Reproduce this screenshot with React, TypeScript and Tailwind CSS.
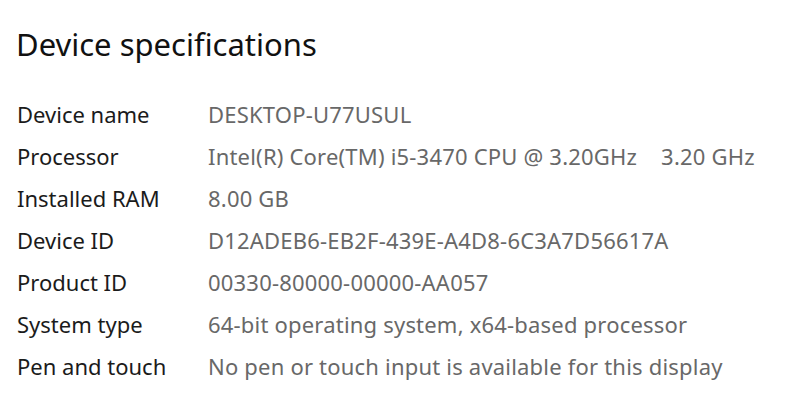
import React from "react";

const rows: [string, React.ReactNode][] = [
  ["Device name", "DESKTOP-U77USUL"],
  [
    "Processor",
    <>
      Intel(R) Core(TM) i5-3470 CPU @ 3.20GHz
      <span className="inline-block w-[24px]" />
      3.20 GHz
    </>,
  ],
  ["Installed RAM", "8.00 GB"],
  ["Device ID", "D12ADEB6-EB2F-439E-A4D8-6C3A7D56617A"],
  ["Product ID", "00330-80000-00000-AA057"],
  ["System type", "64-bit operating system, x64-based processor"],
  ["Pen and touch", "No pen or touch input is available for this display"],
];

export default function App() {
  return (
    <div
      className="w-[800px] h-[403px] bg-white overflow-hidden pl-[16px] pt-[24px]"
      style={{ fontFamily: '"Noto Sans", "Open Sans", sans-serif' }}
    >
      <h1 className="text-[31px] leading-[40px] text-[#111] font-normal">Device specifications</h1>
      <div className="mt-[29px] flex flex-col">
        {rows.map(([k, v]) => (
          <div key={k} className="flex h-[42px] items-center text-[22px]">
            <div className="w-[192px] pl-[1px] text-[#1b1b1b]">{k}</div>
            <div className="text-[#686868] tracking-[0.2px] whitespace-nowrap">{v}</div>
          </div>
        ))}
      </div>
    </div>
  );
}
